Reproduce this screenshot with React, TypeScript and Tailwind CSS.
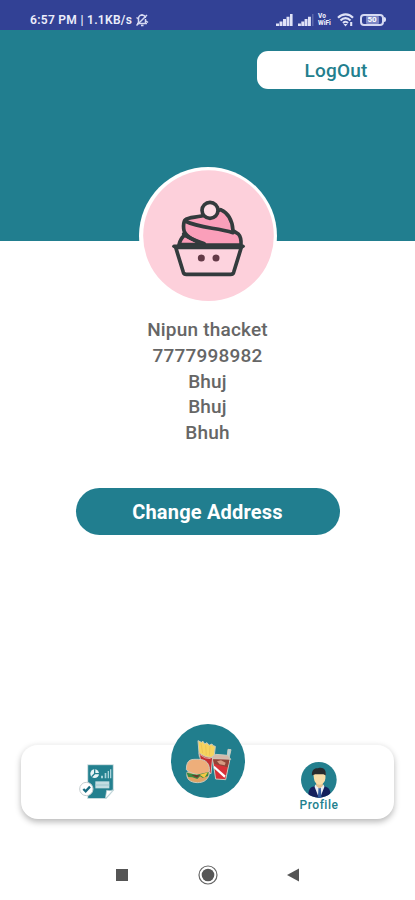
const details = ["Nipun thacket", "7777998982", "Bhuj", "Bhuj", "Bhuh"];

function StatusBar() {
  return (
    <div className="flex h-[30px] shrink-0 items-center justify-between bg-[#324195] pl-[30px] pr-[29px] pt-[9px] text-[#eceefb]">
      <div className="flex items-center">
        <span className="w-[103px] whitespace-nowrap text-[12px] leading-[14px] font-semibold tracking-[0.3px]">
          6:57 PM | 1.1KB/s
        </span>
        <svg className="ml-[2px]" width="14" height="14" viewBox="0 0 14 14" fill="none" stroke="#d5d9f2" strokeWidth="1.5">
          <path d="M3.5 10.5V6a3.5 3.5 0 0 1 7-1M10.5 6v4.5M2 10.5h10M6 12.5h2.5M7 1v2" />
          <path d="M1.5 12.5 12 2M1.5 4.5l2 1.5M11 8l2 1.5" />
        </svg>
      </div>
      <div className="flex items-center">
        <svg width="17" height="12" viewBox="0 0 17 12" fill="#dfe2f7">
          <path d="M0 9.500h3V12H0zM3.500 7.500h3V12h-3zM7 5h3v7H7zM10.500 2.700h3V12h-3zM14 0h2.600v12H14z" />
        </svg>
        <svg className="ml-[5px]" width="16" height="12" viewBox="0 0 16 12" fill="#dfe2f7">
          <path d="M0 9.500h2.900V12H0zM3.300 7.500h2.900V12H3.300zM6.600 5h2.900v7H6.600zM10 2.700h2.900V12H10z" />
          <path d="M14 0h1.500v12H14z" opacity=".25" />
        </svg>
        <div className="ml-[4px] flex w-[15px] flex-col text-[6.500px] leading-[7px] font-extrabold">
          <span>Vo</span>
          <span>WiFi</span>
        </div>
        <svg className="ml-[4px]" width="18" height="14" viewBox="0 0 18 14" fill="none" stroke="#dfe2f7" strokeWidth="2.1">
          <path d="M1 4.800C5.500.2 12 .2 16 4.800M3.500 7.500c3-3.200 7-3.200 10 0M6 10c1.700-1.600 3.500-1.600 5 0" />
          <path d="m8.500 13.500-2-2.500h4z" fill="#dfe2f7" stroke="none" />
          <path d="M14.200 9v4" />
        </svg>
        <div className="ml-[5px] flex items-center">
          <div className="flex h-[12px] w-[24px] items-center justify-center rounded-[4px] border-2 border-[#d5d9f2]">
            <span className="flex h-[8px] w-[13px] items-center justify-center rounded-[1px] bg-[#7d87c5] text-[8px] leading-[8px] font-bold text-white">
              50
            </span>
          </div>
          <div className="h-[5px] w-[2px] rounded-r bg-[#dfe2f7]" />
        </div>
      </div>
    </div>
  );
}

function CupcakeAvatar() {
  return (
    <svg className="block" width="138" height="138" viewBox="27 21 414 414">
      <circle cx="234" cy="228" r="207" fill="#fff" />
      <circle cx="235.500" cy="227" r="196" fill="#fdd0db" />
      <g stroke="#333b3d" strokeWidth="11" strokeLinejoin="round" strokeLinecap="round">
        <path d="M147 254c3-13 8-22 18-29l58 29z" fill="#fb9cb8" />
        <path d="M165 180c12-11 39-6 65-17 12-6 28-9 42-14 20 9 35 30 37 63l16 10c7 7 9 15 8 33H223c-28-13-61-25-62-49-1-11 0-20 4-26z" fill="#fa9fba" />
        <path d="M165 183c44 22 92 19 144 35" fill="none" />
        <path d="M161 222c20 16 42 22 62 29" fill="none" />
        <circle cx="240" cy="151" r="24" fill="#fddce4" />
        <path d="m137 262 23 75q2 6 9 6h133q7 0 9-6l23-75z" fill="#fdd3de" />
        <path d="M132 259h207" fill="none" />
      </g>
      <circle cx="214" cy="294" r="10.500" fill="#633a47" />
      <circle cx="258" cy="294" r="10.500" fill="#633a47" />
    </svg>
  );
}

function ReportIcon() {
  return (
    <svg width="36" height="36" viewBox="26 37 108 108">
      <path d="M52 42h77v78l-22 24H52z" fill="#23808f" stroke="#d9e4e6" strokeWidth="3" />
      <circle cx="73" cy="69" r="13" fill="#e8f4f6" />
      <path d="M73 69V56M73 69h13M73 69l-9 9" stroke="#23808f" strokeWidth="4" />
      <path d="M92 75h6v8h-6zM103 67h5v16h-5zM112 61h4v22h-4zM119 56h4v27h-4z" fill="#a9d3da" />
      <path d="M75 92h42v21H75z" fill="#c3dde2" />
      <path d="M75 103h42" stroke="#9cc6cd" strokeWidth="3" />
      <path d="m105 144 4-25q10 3 21-2z" fill="#fff" stroke="#b6cdd1" strokeWidth="2" />
      <circle cx="48" cy="115" r="20" fill="#fff" stroke="#c5cdcf" strokeWidth="3" />
      <path d="m39 115 7 7 13-14" fill="none" stroke="#176b80" strokeWidth="7" />
    </svg>
  );
}

function FastFood() {
  return (
    <svg width="74" height="74" viewBox="33 26 222 222">
      <g stroke="#c9cbbd" strokeWidth="3" strokeLinejoin="round">
        <path d="m114 76 10 5 5-3 5 8 7-4 6 8 9-4 3 5 7 2-5 45-43-14z" fill="#f6d45f" />
        <path d="M117 112c15 12 26 15 41 14l-5 49-26-14z" fill="#c52d32" />
        <path d="m201 131 3-29 9 1-7 30z" fill="#b6d4da" />
        <path d="m157 127 53 4-13 62-30-2z" fill="#d83137" />
        <path d="m155 125 12-8 36 3 9 12-54-1z" fill="#d5b9aa" />
        <path d="M81 170c-4 23 11 31 31 32 20 0 34-9 37-32z" fill="#dfa365" />
        <path d="M79 163c0-34 18-31 36-31 25 0 35 15 33 36-14 14-49 13-69-5z" fill="#eeae7a" />
      </g>
      <path d="m123 84 5 29M137 90l2 29M150 92l-2 29" stroke="#eec556" strokeWidth="3" />
      <path d="M117 116q18 16 35 14" fill="none" stroke="#e5a397" strokeWidth="3" />
      <path d="m159 132 49 1-5 23-40-10z" fill="#914638" />
      <path d="m171 138 12-3 14 7-3 8-15-3z" fill="#d69a80" />
      <path d="m161 158 32 29 4-6-34-30z" fill="#fff" />
      <path d="M79 171c10 4 20 6 31 7l36-8-2 12-15 6-9-5-8 8-15-5-12-1z" fill="#378b42" />
      <path d="m94 179 26 1-9 7z" fill="#71352b" />
      <path d="m119 178 25-7-11 17z" fill="#f4c744" />
    </svg>
  );
}

function PersonIcon() {
  return (
    <svg width="36" height="36" viewBox="33 37 109 109">
      <clipPath id="person">
        <circle cx="87" cy="91" r="54" />
      </clipPath>
      <g clipPath="url(#person)">
        <path d="M33 37h109v109H33z" fill="#237f8e" />
        <path d="M55 146c0-25 3-33 22-36h22c20 3 24 12 24 36z" fill="#15215d" />
        <path d="m77 105 12 9 12-9 3 7-12 30h-6l-12-30z" fill="#e9eef5" />
        <path d="m86 115 7 0 2 31H84z" fill="#315a9e" />
        <path d="M79 94h20v16l-10 7-10-7z" fill="#e5c38e" />
        <path d="M70 69h37v17q-2 18-18 20-15-2-17-20z" fill="#f8dda8" />
        <path d="M66 78c-1-16 7-23 18-22 17-5 26 5 24 22l-7-4H76z" fill="#282b2e" />
      </g>
    </svg>
  );
}

function BottomNav() {
  return (
    <div className="mx-[21px] flex h-[75px] items-start rounded-[17px] border-t border-[#f4f4f4] bg-white shadow-[0_3px_6px_rgba(0,0,0,0.28)]">
      <button className="ml-[58px] mt-[18px]">
        <ReportIcon />
      </button>
      <button className="ml-[56px] -mt-[21px] flex size-[74px] items-center justify-center rounded-full bg-[#217e8d]">
        <FastFood />
      </button>
      <button className="ml-[51px] mt-[17px] flex w-[46px] flex-col items-center">
        <PersonIcon />
        <span className="text-[12px] leading-[14px] font-medium tracking-[0.500px] text-[#237f8e]">Profile</span>
      </button>
    </div>
  );
}

function SystemNav() {
  return (
    <div className="mt-[46px] flex items-center pl-[116px]">
      <div className="size-[12px] bg-[#555]" />
      <svg className="ml-[70px]" width="20" height="20" viewBox="0 0 20 20">
        <circle cx="10" cy="10" r="9" fill="none" stroke="#666" strokeWidth="1.200" />
        <circle cx="10" cy="10" r="6.300" fill="#555" />
      </svg>
      <svg className="ml-[69px]" width="12" height="14" viewBox="0 0 12 14">
        <path d="M0 7 12 .5v13z" fill="#555" />
      </svg>
    </div>
  );
}

export default function App() {
  return (
    <div className="flex h-[900px] w-[415px] flex-col overflow-hidden bg-white font-[Roboto,sans-serif]">
      <StatusBar />
      <div className="flex h-[211px] shrink-0 flex-col bg-[#217e8f]">
        <button className="mt-[21px] h-[38px] w-[158px] shrink-0 self-end rounded-l-[11px] bg-white pt-[2px] text-[19px] font-medium tracking-[0.2px] text-[#237f8e]">
          LogOut
        </button>
        <div className="mt-[78px] self-center">
          <CupcakeAvatar />
        </div>
      </div>
      <div className="mt-[76px] flex flex-col items-center text-[19px] leading-[25.800px] font-medium tracking-[0.2px] text-[#666]">
        {details.map((line, i) => (
          <p key={i}>{line}</p>
        ))}
      </div>
      <button className="mt-[42px] h-[47px] w-[264px] shrink-0 self-center rounded-full bg-[#217e8f] pt-[2px] text-[20px] font-bold tracking-[0.2px] text-white">
        Change Address
      </button>
      <div className="mt-auto h-[156px] shrink-0">
        <BottomNav />
        <SystemNav />
      </div>
    </div>
  );
}
